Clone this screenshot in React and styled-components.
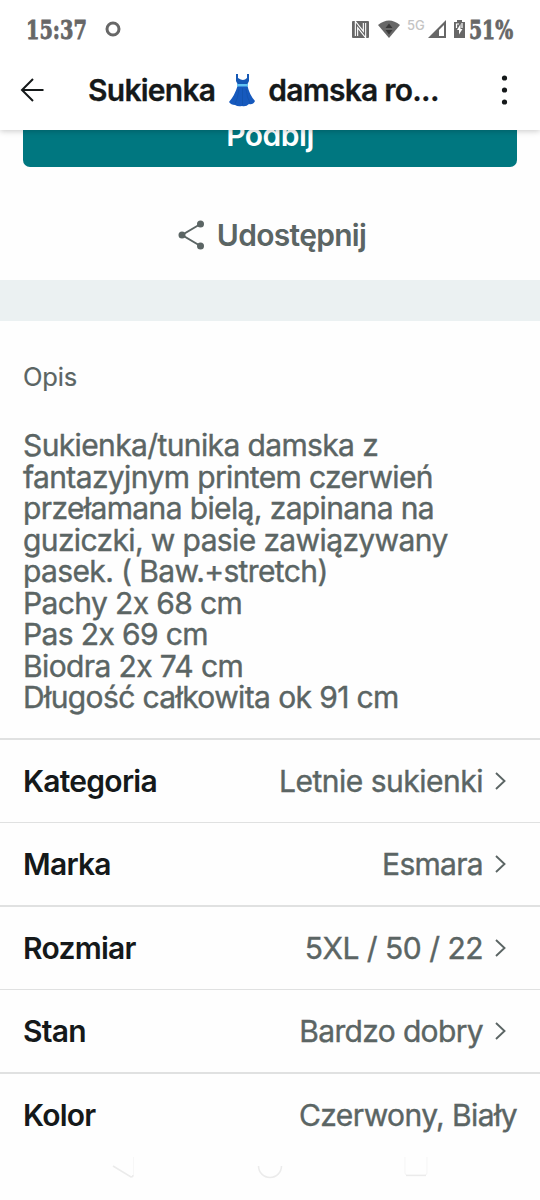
import React from "react";
import styled, { createGlobalStyle } from "styled-components";

const GlobalStyle = createGlobalStyle`
  *{
    box-sizing:border-box;
  }
  body{
    margin:0;
    background:#fff;
    font-family:Inter, "Liberation Sans", sans-serif;
  }
`;

const Screen = styled.div`
  width:540px;
  height:1200px;
  overflow:hidden;
  display:flex;
  flex-direction:column;
  background:#fefefe;
  color:#5b6564;
`;

const Header = styled.header`
  flex:none;
  height:130px;
  background:#fff;
  box-shadow:0 1px 6px rgba(0,0,0,0.22);
  position:relative;
  z-index:1;
`;

const StatusBar = styled.div`
  height:58px;
  padding:0 26px;
  display:flex;
  align-items:center;
  justify-content:space-between;
  color:#676767;
`;

const StatusGroup = styled.div`
  display:flex;
  align-items:center;
  svg{
    flex:none;
    display:block;
  }
`;

const StatusText = styled.span`
  width:${({ $width }) => $width}px;
  margin-top:1px;
  white-space:nowrap;
  font-family:"DejaVu Serif Condensed", "DejaVu Serif", serif;
  font-stretch:condensed;
  font-weight:700;
  font-size:26.5px;
  line-height:32px;
  -webkit-text-stroke:0.8px #676767;
  transform:scaleX(${({ $squeeze }) => $squeeze});
  transform-origin:left center;
`;

const Network = styled.span`
  width:18px;
  margin:-9px 3px 0 7px;
  font-size:13px;
  line-height:14px;
  font-weight:500;
  color:#c4c4c4;
`;

const TitleBar = styled.div`
  height:64px;
  padding:0 25px 0 20px;
  display:flex;
  align-items:center;
  color:#15191a;
  svg{
    flex:none;
    display:block;
  }
`;

const Title = styled.h1`
  flex:1;
  margin:0 0 0 44px;
  display:flex;
  align-items:center;
  white-space:nowrap;
  font-size:30px;
  line-height:36px;
  font-weight:600;
  letter-spacing:-0.75px;
  -webkit-text-stroke:0.3px #15191a;
  svg{
    margin:0 12px 0 13px;
  }
`;

const Actions = styled.section`
  flex:none;
  height:150px;
  padding:0 23px;
`;

const BoostButton = styled.button`
  display:block;
  width:100%;
  height:66px;
  margin-top:-29px;
  padding:2px 0 0;
  border:0;
  border-radius:7px;
  background:#007780;
  color:#fff;
  font:600 30px/64px Inter, sans-serif;
  letter-spacing:-0.5px;
`;

const ShareButton = styled.button`
  display:flex;
  width:100%;
  height:60px;
  margin-top:38px;
  padding:0 0 0 4px;
  justify-content:center;
  align-items:center;
  gap:12px;
  border:0;
  background:none;
  color:#5b6564;
  font:600 30px/36px Inter, sans-serif;
  letter-spacing:-0.7px;
`;

const Divider = styled.div`
  flex:none;
  height:41px;
  background:#ebf1f2;
`;

const Description = styled.section`
  flex:none;
  height:417px;
  padding:40px 23px 0;
`;

const Label = styled.h2`
  margin:0;
  font-size:25.5px;
  line-height:32px;
  font-weight:400;
  letter-spacing:-0.2px;
  -webkit-text-stroke:0.2px #5b6564;
`;

const Text = styled.p`
  margin:37px 0 0;
  white-space:pre;
  font-size:30px;
  line-height:31.5px;
  letter-spacing:-0.62px;
  -webkit-text-stroke:0.4px #5b6564;
`;

const Row = styled.div`
  flex:none;
  height:83.5px;
  padding:0 23px;
  display:flex;
  align-items:center;
  border-top:${({ $line }) => $line}px solid #e0e1e1;
  font-size:30px;
  line-height:36px;
`;

const Name = styled.span`
  font-weight:600;
  color:#15191a;
  letter-spacing:-0.75px;
`;

const Value = styled.span`
  margin-left:auto;
  letter-spacing:${({ $spacing }) => $spacing}px;
  white-space:nowrap;
  -webkit-text-stroke:0.4px #5b6564;
`;

const Chevron = styled.svg`
  flex:none;
  display:block;
  margin:0 11px 0 12px;
`;

const NavBar = styled.nav`
  flex:none;
  height:44px;
  margin-top:-1px;
  padding:0 112px;
  display:flex;
  justify-content:space-between;
`;

const description = `Sukienka/tunika damska z
fantazyjnym printem czerwień
przełamana bielą, zapinana na
guziczki, w pasie zawiązywany
pasek. ( Baw.+stretch)
Pachy 2x 68 cm
Pas 2x 69 cm
Biodra 2x 74 cm
Długość całkowita ok 91 cm`;

const details = [
  { name: "Kategoria", value: "Letnie sukienki", link: true, line: 2, spacing: -0.5 },
  { name: "Marka", value: "Esmara", link: true, line: 1, spacing: -0.7 },
  { name: "Rozmiar", value: "5XL / 50 / 22", link: true, line: 2, spacing: -0.5 },
  { name: "Stan", value: "Bardzo dobry", link: true, line: 1, spacing: -0.65 },
  { name: "Kolor", value: "Czerwony, Biały", link: false, line: 2, spacing: -0.6 },
];

const Dress = () => (
  <svg width="28" height="34" viewBox="0 0 28 34">
    <path d="M8 1v7l2 4h9l2-4V1h-2v4q-2 2-4 2T10 5V1z" fill="#1558b5" />
    <path d="M9.5 13h10q2 9 7.5 15-2 4-6 3-3 3-7 2-4 1-7-1-4 0-6-3 6-7 8.5-16z" fill="#1659bd" />
    <path d="M11 16Q10 25 7 31M14.500 15v17M18 16q1 9 4 14" fill="none" stroke="#104fa6" strokeWidth="0.600" />
    <path d="M9 11h11v2.500H9z" fill="#62c3f3" />
  </svg>
);

const App = () => {
  return (
    <>
      <GlobalStyle />
      <Screen>
        <Header>
          <StatusBar>
            <StatusGroup>
              <StatusText $width={79} $squeeze={0.81}>15:37</StatusText>
              <svg width="16" height="16" viewBox="0 0 16 16">
                <circle cx="8" cy="8" r="6" fill="none" stroke="currentColor" strokeWidth="3" />
              </svg>
            </StatusGroup>
            <StatusGroup>
              {/* nfc */}
              <svg width="17" height="17" viewBox="0 0 17 17">
                <rect width="17" height="17" rx="1" fill="currentColor" />
                <path d="M4.500 15V3.500L12.500 13.500V2" fill="none" stroke="#fff" strokeWidth="3.400" />
                <path d="M4.500 15V3.500L12.500 13.500V2" fill="none" stroke="currentColor" strokeWidth="1.200" />
              </svg>
              {/* wifi */}
              <svg width="22" height="19" viewBox="0 0 22 19" style={{ marginLeft: 9 }}>
                <path d="M0 5Q11-4 22 5L11 18z" fill="currentColor" />
                <path d="M7.500 8L11 3.500 14.500 8zM7.500 10L11 14.500 14.500 10z" fill="#383838" />
              </svg>
              <Network>5G</Network>
              <svg width="18" height="18" viewBox="0 0 18 18">
                <path d="M0 18L18 0v18z" fill="currentColor" />
                <path d="M11 10l5-5V16H11z" fill="#fff" />
              </svg>
              {/* battery */}
              <svg width="11" height="18" viewBox="0 0 11 18" style={{ margin: "0 4px 0 8px" }}>
                <path d="M3 0h5v2h3v16H0V2h3z" fill="currentColor" />
                <path d="M2.500 8V4h2.500M8 3v5" fill="none" stroke="#fff" strokeWidth="1.200" />
                <path d="M6.500 4L3 10h2v4.500L8.500 9h-2z" fill="#fff" />
              </svg>
              <StatusText $width={45} $squeeze={0.79}>51%</StatusText>
            </StatusGroup>
          </StatusBar>
          <TitleBar>
            <svg width="24" height="24" viewBox="0 0 24 24" fill="none" stroke="currentColor" strokeWidth="2">
              <path d="M23.500 12H2M13 1L2 12l11 11" />
            </svg>
            <Title>
              Sukienka
              <Dress />
              damska ro...
            </Title>
            <svg width="22" height="30" viewBox="0 0 22 30" fill="currentColor">
              <circle cx="11.500" cy="3" r="2.600" />
              <circle cx="11.500" cy="15" r="2.600" />
              <circle cx="11.500" cy="27" r="2.600" />
            </svg>
          </TitleBar>
        </Header>
        <Actions>
          <BoostButton>Podbij</BoostButton>
          <ShareButton>
            <svg width="27" height="30" viewBox="0 0 27 30">
              <path d="M22.500 4L4 15l18.500 11" fill="none" stroke="currentColor" strokeWidth="2" />
              <circle cx="22.500" cy="4" r="3.500" fill="currentColor" />
              <circle cx="4" cy="15" r="3.500" fill="currentColor" />
              <circle cx="22.500" cy="26" r="3.500" fill="currentColor" />
            </svg>
            Udostępnij
          </ShareButton>
        </Actions>
        <Divider />
        <Description>
          <Label>Opis</Label>
          <Text>{description}</Text>
        </Description>
        {details.map(({ name, value, link, line, spacing }) => (
          <Row key={name} $line={line}>
            <Name>{name}</Name>
            <Value $spacing={spacing}>{value}</Value>
            {link && (
              <Chevron width="11" height="18" viewBox="0 0 11 18">
                <path d="M1 1l8.500 8L1 17" fill="none" stroke="#5b6564" strokeWidth="1.900" />
              </Chevron>
            )}
          </Row>
        ))}
        <NavBar>
          <svg width="24" height="26" viewBox="0 0 24 26" fill="none" stroke="#ebebeb">
            <path d="M1 11l18 11q2 0 2-2" strokeWidth="1.500" />
            <path d="M21.500 20V2" stroke="#f7f7f7" />
          </svg>
          <svg width="26" height="26" viewBox="0 0 26 26" fill="none" stroke="#ebebeb">
            <path d="M1.500 11a11.500 11.500 0 0 0 23 0" strokeWidth="1.500" />
          </svg>
          <svg width="24" height="26" viewBox="0 0 24 26" fill="none" stroke="#ebebeb">
            <path d="M1 2v16q0 2 2 2h18q2 0 2-2V2" stroke="#f5f5f5" />
            <path d="M2 20.500h20" strokeWidth="1.300" />
          </svg>
        </NavBar>
      </Screen>
    </>
  );
};

export default App;
